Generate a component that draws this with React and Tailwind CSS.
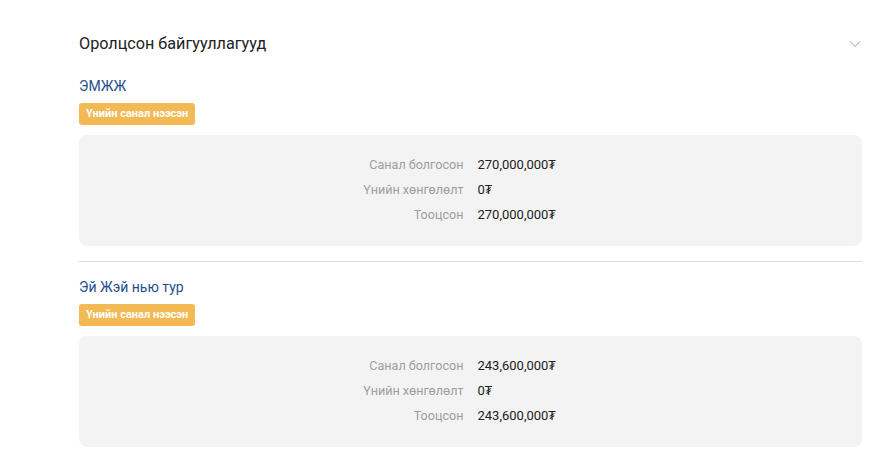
import React from 'react';

const orgs = [
    {
        name: 'ЭМЖЖ',
        rows: [
            ['Санал болгосон', '270,000,000₮'],
            ['Үнийн хөнгөлөлт', '0₮'],
            ['Тооцсон', '270,000,000₮']
        ]
    },
    {
        name: 'Эй Жэй нью тур',
        rows: [
            ['Санал болгосон', '243,600,000₮'],
            ['Үнийн хөнгөлөлт', '0₮'],
            ['Тооцсон', '243,600,000₮']
        ]
    }
];

function OrgCard({ org }) {
    return (
        <div>
            <p className="text-[14px] leading-[20px] text-[#1f4e8c]">{org.name}</p>
            <span className="inline-block mt-[7px] h-[22px] leading-[22px] px-[7px] rounded-[3px] bg-[#f2b955] text-white text-[11px] font-bold">
                Үнийн санал нээсэн
            </span>
            <div className="mt-[10px] bg-[#f3f3f3] rounded-lg pt-[17px] pb-[19px] grid grid-cols-2 gap-x-[14px] text-[13px] leading-[25px]">
                {org.rows.map(([label, value], key) => (
                    <React.Fragment key={key}>
                        <span className="text-right text-[#9e9e9e] text-[12.6px]">{label}</span>
                        <span className="text-[#222]">{value}</span>
                    </React.Fragment>
                ))}
            </div>
        </div>
    );
}

export default function App() {
    return (
        <div className="w-[880px] h-[465px] bg-white overflow-hidden" style={{ fontFamily: 'Roboto, "Noto Sans", sans-serif' }}>
            <div className="ml-[79px] w-[783px] pt-[32px]">
                <div className="flex items-center justify-between h-[24px]">
                    <h2 className="text-[16.2px] text-[#222]">Оролцсон байгууллагууд</h2>
                    <svg width="12" height="8" viewBox="0 0 12 8" className="mr-[1px]" fill="none">
                        <path d="M1 1.5l5 5 5-5" stroke="#c4c4c4" strokeWidth="1.2" />
                    </svg>
                </div>
                <div className="mt-[20px]">
                    <OrgCard org={orgs[0]} />
                </div>
                <div className="mt-[15px] border-t border-[#dddddd]" />
                <div className="mt-[15px]">
                    <OrgCard org={orgs[1]} />
                </div>
            </div>
        </div>
    );
}
